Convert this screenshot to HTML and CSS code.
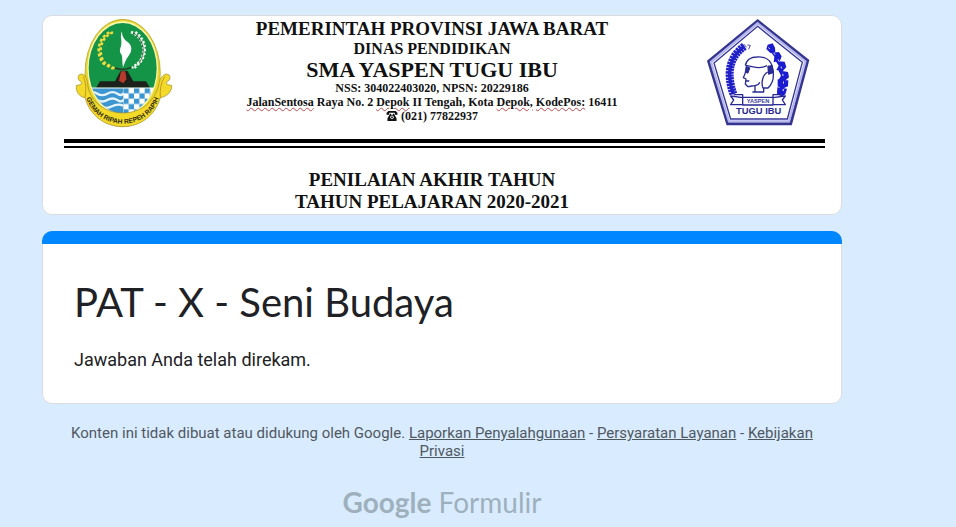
FILE: index.html
```html
<!DOCTYPE html>
<html lang="id">
<head>
<meta charset="utf-8">
<meta name="viewport" content="width=device-width, initial-scale=1">
<title>PAT - X - Seni Budaya</title>
<link rel="stylesheet" href="styles.css">
</head>
<body>
<main class="page">
  <header class="card banner">
    <div class="letterhead">
      <svg class="crest" viewBox="39 24 300 330" role="img" aria-label="Jawa Barat">
        <defs>
          <clipPath id="shield"><ellipse cx="188" cy="171" rx="102" ry="136"/></clipPath>
          <pattern id="checks" x="190" y="230" width="32" height="32" patternUnits="userSpaceOnUse">
            <path fill="#fff" d="M0 0h32v32H0z"/><path fill="#3c97d0" d="M0 0h16v16H0zM16 16h16v16H16z"/>
          </pattern>
        </defs>
        <ellipse cx="188" cy="189" rx="113" ry="161" fill="#e8d62a" stroke="#a89a2c" stroke-width="2"/>
        <ellipse cx="188" cy="175" rx="106" ry="141" fill="#fff8b0"/>
        <g clip-path="url(#shield)" transform="translate(0 4)">
          <path fill="#139447" d="M80 30h220v200H80z"/>
          <path fill="#3c97d0" d="M80 230h110v90H80z"/>
          <path fill="url(#checks)" d="M190 230h110v90H190z"/>
          <path d="M82 247q16-9 30 0t30 0 30 0 18-2M82 266q16-9 30 0t30 0 30 0 18-2M96 285q16-9 30 0t30 0 34-2" fill="none" stroke="#e6f5fb" stroke-width="7"/>
          <path fill="#1c211c" d="M108 229l12-19h45l17-32h20l18 32h38l12 19z"/>
          <path fill="#b83a2d" d="M183 180h13l3 24-9 12-13-8z"/>
          <path d="M80 230h220" stroke="#f3f4ee" stroke-width="3"/>
        </g>
        <path fill="#fff" d="M186 64c-7 15 0 24-2 37-1 13-9 19 0 32 4 8 2 20 5 39 5-11 7-23 17-35 12-14 10-32-3-41-11-8-17-16-17-32z"/>
        <path d="M154 68c-34 18-43 63-18 94l28 13" fill="none" stroke="#337a24" stroke-width="3"/>
        <path d="M159 67c-38 15-48 61-25 92l30 17M148 67c-35 20-42 65-17 94l28 15" fill="none" stroke="#e9dc42" stroke-width="8" stroke-dasharray="9 6"/>
        <path d="M213 66c38 15 48 59 25 90l-22 18M226 66c32 23 37 63 14 91l-18 18" fill="none" stroke="#eef4e9" stroke-width="8" stroke-dasharray="7 5"/>
        <path d="M219 68c34 20 39 63 18 91" fill="none" stroke="#263c2a" stroke-width="2"/>
        <path d="M165 174q25 9 48-2" fill="none" stroke="#293525" stroke-width="4"/>
        <path fill="#f3d928" stroke="#9b8a2e" stroke-width="2" d="M75 197c-17-13-25 4-18 14 12 5 10 15-8 15-2 20 9 35 26 37 15 54 60 87 113 87s98-33 113-87c17-2 36-17 34-37-18 0-20-10-8-15 8-10-1-27-18-14-12 10-12 26-15 37-14 43-53 75-106 75S98 277 86 240c-4-14-2-33-11-43z"/>
        <path d="M70 200q12 25 5 63M314 200q-16 25-13 63" fill="none" stroke="#c29a24" stroke-width="3"/>
        <path id="motto" d="M72 236C92 376 284 376 304 236" fill="none"/>
        <text class="motto"><textPath href="#motto" startOffset="50%">GEMAH RIPAH REPEH RAPIH</textPath></text>
      </svg>
      <div class="school">
        <p class="province">PEMERINTAH PROVINSI JAWA BARAT</p>
        <p class="department">DINAS PENDIDIKAN</p>
        <p class="school-name">SMA YASPEN TUGU IBU</p>
        <p class="detail">NSS: 304022403020, NPSN: 20229186</p>
        <p class="detail"><span class="marked">JalanSentosa</span> Raya No. 2 <span class="marked">Depok</span> II Tengah, Kota <span class="marked">Depok,</span> <span class="marked">KodePos:</span> 16411</p>
        <p class="detail"><svg class="phone" viewBox="0 0 12 11" aria-hidden="true"><path fill="#111" d="M2 0h8l2 2v2H9V2H3v2H0V2zM4 3h1v1h2V3h1l3 5v3H1V8z"/><circle cx="6" cy="7" r="2" fill="#ddd"/><circle cx="6" cy="7" r="1" fill="#111"/></svg> (021) 77822937</p>
      </div>
      <svg class="emblem" viewBox="45 21 315 327" role="img" aria-label="Yaspen Tugu Ibu">
        <path d="M200 30L350 149 299 338H110L53 151z" fill="#fff" stroke="#35358f" stroke-width="9"/>
        <path d="M200 37L343 151 294 331H114L60 153z" fill="none" stroke="#b6b6ee" stroke-width="7"/>
        <path d="M200 46L334 154 289 324H119L69 156z" fill="#fff" stroke="#35359a" stroke-width="4"/>
        <path d="M160 106C112 140 107 191 127 249" fill="none" stroke="#2020c6" stroke-width="24" stroke-dasharray="7 2"/>
        <path d="M160 106C112 140 107 191 127 249" fill="none" stroke="#2020c6" stroke-width="10"/>
        <path d="M158 99l9 10M169 102l9 1-5 12" fill="none" stroke="#4444aa" stroke-width="3"/>
        <path fill="#1b1bd0" d="M230 101l15-4 7 13 1 13-15 3-12-12zM241 125l23-2 8 13-5 13-19 5 2-17zM254 150l27 2 5 16-11 13-19-4 7-13zM262 178l29 5 3 16-14 12-17-5 7-12zM260 205l32 3-1 18-17 7-14-7zM259 229l29 4-5 17-15 10-10-12z"/>
        <path d="M232 110q56 46 43 142" fill="none" stroke="#fff" stroke-width="3" stroke-dasharray="6 17"/>
        <g fill="none" stroke="#292994" stroke-width="4" stroke-linejoin="round">
          <path d="M163 164c3-18 18-26 34-26 26-2 43 10 47 31 6 23 3 47-13 62h-15c-6-15-2-39 14-48M164 163c24 5 41 12 64 1M166 169c-2 13-2 19-9 31l8 4-2 15 8 8c10-1 16-4 21-3v19M218 229v14h-34M163 210h12M190 224q12 0 16-10"/>
          <path fill="#2b2b9b" d="M166 167l10 4-6 15-5-3zM231 166l12-2 4 20-14 5z"/>
          <path fill="#fff" d="M155 259h91v23h-91zM155 260l-36-5 9 12-9 14h36zM246 260l37-5-9 12 9 14h-37zM128 251h27v9M273 251h-27v9"/>
        </g>
        <text class="ribbon-text" x="201" y="277">YASPEN</text>
        <text class="emblem-text" x="203" y="308">TUGU IBU</text>
      </svg>
    </div>
    <div class="exam">
      <p>PENILAIAN AKHIR TAHUN</p>
      <p>TAHUN PELAJARAN 2020-2021</p>
    </div>
  </header>
  <section class="card response">
    <h1>PAT - X - Seni Budaya</h1>
    <p>Jawaban Anda telah direkam.</p>
  </section>
  <footer class="footer">
    <p class="legal">Konten ini tidak dibuat atau didukung oleh Google. <a href="#report">Laporkan Penyalahgunaan</a> - <a href="#terms">Persyaratan Layanan</a> - <a href="#privacy">Kebijakan Privasi</a></p>
    <a class="brand" href="#forms"><span class="brand-name">Google</span> Formulir</a>
  </footer>
</main>
</body>
</html>
```
FILE: styles.css
```css
* { box-sizing: border-box; }
body {
  margin: 0;
  background: #d9ecff;
  color: #202124;
  font-family: Roboto, "Liberation Sans", sans-serif;
}
p, h1 { margin: 0; }
.page {
  max-width: 884px;
  padding: 15px 42px 0;
}
.card {
  background: #fff;
  border: 1px solid #dadce0;
  border-radius: 10px;
}
.banner {
  padding: 2px 16px 1px 21px;
  font-family: "Liberation Serif", serif;
  font-weight: 700;
  color: #111;
  text-align: center;
}
.letterhead {
  display: grid;
  grid-template-columns: 109px 1fr 134px;
  grid-template-rows: 121px 9px;
}
.letterhead::after {
  content: "";
  grid-column: 1 / -1;
  border-top: 4px solid #000;
  border-bottom: 2px solid #000;
}
.crest { width: 100px; height: 110px; justify-self: end; }
.emblem { width: 105px; height: 109px; justify-self: center; }
.motto {
  font: 700 20px "Liberation Sans", sans-serif;
  fill: #2c2a12;
  text-anchor: middle;
}
.ribbon-text {
  font: 700 17px "Liberation Sans", sans-serif;
  fill: #40409a;
  text-anchor: middle;
}
.emblem-text {
  font: 700 28px "Liberation Sans", sans-serif;
  fill: #292994;
  text-anchor: middle;
}
.school { white-space: nowrap; }
.province { font-size: 19px; line-height: 21px; }
.department { font-size: 16px; line-height: 20px; }
.school-name { font-size: 22px; line-height: 22px; }
.detail { font-size: 12px; line-height: 14px; }
.marked { text-decoration: underline wavy #c0474d 1px; }
.phone { width: 12px; height: 10px; vertical-align: -1px; }
.exam {
  padding: 21px 25px 0 0;
  font-size: 19px;
  line-height: 22px;
}
.response {
  position: relative;
  margin-top: 16px;
  padding: 43px 31px 31px;
}
.response::before {
  content: "";
  position: absolute;
  top: -1px;
  left: -1px;
  right: -1px;
  height: 13px;
  border-radius: 10px 10px 0 0;
  background: #0087ff;
}
.response h1 {
  font-family: Lato, sans-serif;
  font-size: 40px;
  font-weight: 400;
  line-height: 54px;
}
.response p {
  margin-top: 19px;
  font-size: 18px;
  line-height: 24px;
}
.footer {
  padding: 20px 24px 0;
  color: #50585f;
  text-align: center;
}
.legal { font-size: 15px; line-height: 18px; }
.legal a { color: inherit; }
.brand {
  display: inline-block;
  margin-top: 24px;
  font-family: Lato, sans-serif;
  font-size: 28px;
  line-height: 36px;
  color: #9fb0bd;
  text-decoration: none;
}
.brand-name { font-weight: 700; }
```
